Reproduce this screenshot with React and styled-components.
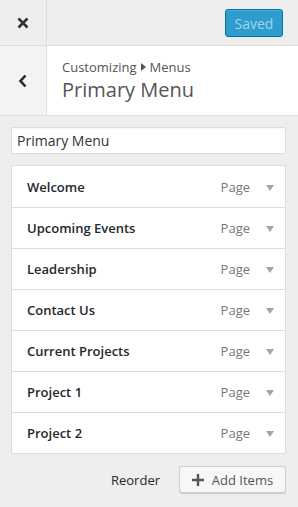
import React from "react";
import styled, { createGlobalStyle } from "styled-components";

const Global = createGlobalStyle`
  html, body { margin: 0; padding: 0; background: #eee; }
  body { font-family: "Open Sans", "Noto Sans", sans-serif; color: #444; }
  * { box-sizing: border-box; }
`;

const Panel = styled.div`
  width: 298px;
  height: 507px;
  background: #eee;
  display: flex;
  flex-direction: column;
  overflow: hidden;
`;

const Header = styled.div`
  display: flex;
  height: 46px;
  border-bottom: 1px solid #ddd;
  background: #eee;
`;

const IconCell = styled.div`
  width: 47px;
  flex: none;
  display: flex;
  align-items: center;
  justify-content: center;
  border-right: 1px solid #ddd;
  background: ${(p) => p.$bg || "#eee"};
  color: #333;
`;

const HeaderRight = styled.div`
  flex: 1;
  display: flex;
  justify-content: flex-end;
  align-items: flex-start;
  padding: 9px 15px 0 0;
`;

const SavedButton = styled.div`
  width: 58px;
  height: 28px;
  border: 1px solid #0073aa;
  border-radius: 3px;
  background: #2e9ccc;
  color: #a4d4ea;
  font-size: 14px;
  display: flex;
  align-items: center;
  justify-content: center;
  box-shadow: inset 0 1px 0 rgba(120, 200, 230, 0.4);
`;

const Section = styled.div`
  display: flex;
  height: 70px;
  border-bottom: 1px solid #ddd;
  background: #fff;
`;

const TitleBlock = styled.div`
  display: flex;
  flex-direction: column;
  padding: 12px 0 0 15px;
`;

const Crumb = styled.div`
  font-size: 13px;
  line-height: 18px;
  color: #555;
  display: flex;
  align-items: center;
  gap: 4px;
`;

const Title = styled.div`
  font-size: 20px;
  line-height: 27px;
  color: #555;
  font-weight: 400;
`;

const Body = styled.div`
  padding: 11px 12px 0 11px;
  display: flex;
  flex-direction: column;
`;

const NameInput = styled.div`
  height: 27px;
  border: 1px solid #ddd;
  background: #fff;
  font-size: 14px;
  color: #333;
  padding: 0 5px;
  display: flex;
  align-items: center;
  box-shadow: inset 0 1px 2px rgba(0,0,0,0.04);
`;

const List = styled.div`
  margin-top: 11px;
  border: 1px solid #ddd;
  background: #fff;
`;

const Item = styled.div`
  height: 41px;
  display: flex;
  align-items: center;
  padding: 0 11px 0 15px;
  border-top: ${(p) => (p.$first ? "none" : "1px solid #ddd")};
`;

const ItemTitle = styled.div`
  flex: 1;
  font-size: 13px;
  font-weight: 600;
  color: #23282d;
`;

const ItemType = styled.div`
  font-size: 13px;
  color: #777;
  margin-right: 16px;
`;

const Arrow = styled.div`
  width: 0;
  height: 0;
  border-left: 4px solid transparent;
  border-right: 4px solid transparent;
  border-top: 6px solid #a0a5aa;
  margin-top: 2px;
`;

const Footer = styled.div`
  display: flex;
  justify-content: flex-end;
  align-items: center;
  gap: 19px;
  padding: 12px 12px 0 0;
`;

const Reorder = styled.div`
  font-size: 13px;
  color: #23282d;
`;

const AddButton = styled.div`
  width: 107px;
  height: 27px;
  border: 1px solid #ccc;
  border-radius: 3px;
  background: #f7f7f7;
  box-shadow: 0 1px 0 #ccc;
  display: flex;
  align-items: center;
  justify-content: center;
  gap: 8px;
  font-size: 13px;
  color: #555;
`;

const items = [
  "Welcome",
  "Upcoming Events",
  "Leadership",
  "Contact Us",
  "Current Projects",
  "Project 1",
  "Project 2",
];

export default function App() {
  return (
    <Panel>
      <Global />
      <Header>
        <IconCell>
          <svg width="12" height="12" viewBox="0 0 12 12">
            <path d="M1.5 1.5 L10.5 10.5 M10.5 1.5 L1.5 10.5" stroke="#333" strokeWidth="2.6" />
          </svg>
        </IconCell>
        <HeaderRight>
          <SavedButton>Saved</SavedButton>
        </HeaderRight>
      </Header>
      <Section>
        <IconCell $bg="#f3f3f3">
          <svg width="10" height="14" viewBox="0 0 10 14">
            <path d="M7.5 1.5 L2.5 7 L7.5 12.5" stroke="#23282d" strokeWidth="2.6" fill="none" />
          </svg>
        </IconCell>
        <TitleBlock>
          <Crumb>
            Customizing
            <svg width="5" height="8" viewBox="0 0 5 8">
              <path d="M0 0 L5 4 L0 8 Z" fill="#555" />
            </svg>
            Menus
          </Crumb>
          <Title>Primary Menu</Title>
        </TitleBlock>
      </Section>
      <Body>
        <NameInput>Primary Menu</NameInput>
        <List>
          {items.map((t, i) => (
            <Item key={t} $first={i === 0}>
              <ItemTitle>{t}</ItemTitle>
              <ItemType>Page</ItemType>
              <Arrow />
            </Item>
          ))}
        </List>
      </Body>
      <Footer>
        <Reorder>Reorder</Reorder>
        <AddButton>
          <svg width="12" height="12" viewBox="0 0 12 12">
            <path d="M6 0 V12 M0 6 H12" stroke="#555" strokeWidth="2.4" />
          </svg>
          Add Items
        </AddButton>
      </Footer>
    </Panel>
  );
}
